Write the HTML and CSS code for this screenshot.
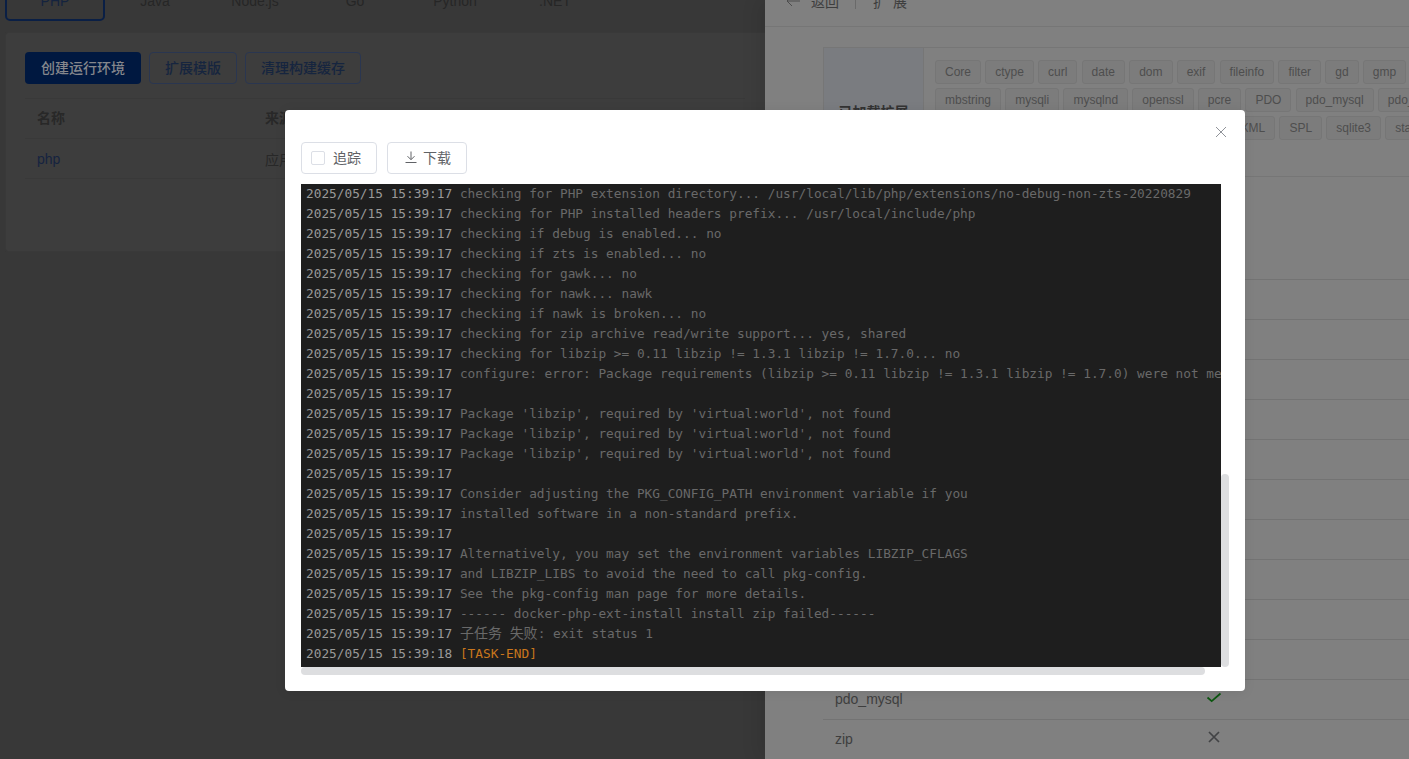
FILE: index.html
```html
<!DOCTYPE html>
<html lang="zh">
<head>
<meta charset="utf-8">
<title>PHP 运行环境</title>
<link rel="stylesheet" href="styles.css">
</head>
<body>
<div class="app">
  <main class="page">
    <nav class="tabs">
      <span class="tab tab-active">PHP</span>
      <span class="tab">Java</span>
      <span class="tab">Node.js</span>
      <span class="tab">Go</span>
      <span class="tab">Python</span>
      <span class="tab">.NET</span>
    </nav>
    <section class="card">
      <div class="actions">
        <span class="btn btn-primary">创建运行环境</span>
        <span class="btn btn-outline">扩展模版</span>
        <span class="btn btn-outline">清理构建缓存</span>
      </div>
      <div class="table">
        <div class="tr th"><span class="c1">名称</span><span>来源</span></div>
        <div class="tr"><span class="c1 link">php</span><span>应用商店</span></div>
      </div>
    </section>
  </main>

  <aside class="drawer">
    <header class="drawer-head">
      <svg class="back" width="14" height="14" viewBox="0 0 14 14"><path d="M14 7H1M6 2L1 7l5 5" fill="none" stroke="currentColor" stroke-width="1"/></svg>
      <span class="back-text">返回</span>
      <span class="divider"></span>
      <span class="drawer-title">扩展</span>
    </header>
    <div class="drawer-body">
      <div class="desc">
        <div class="desc-label">已加载扩展</div>
        <div class="desc-value">
          <div class="tag-row">
            <span class="tag">Core</span><span class="tag">ctype</span><span class="tag">curl</span><span class="tag">date</span><span class="tag">dom</span><span class="tag">exif</span><span class="tag">fileinfo</span><span class="tag">filter</span><span class="tag">gd</span><span class="tag">gmp</span><span class="tag">hash</span>
          </div>
          <div class="tag-row">
            <span class="tag">mbstring</span><span class="tag">mysqli</span><span class="tag">mysqlnd</span><span class="tag">openssl</span><span class="tag">pcre</span><span class="tag">PDO</span><span class="tag">pdo_mysql</span><span class="tag">pdo_sqlite</span>
          </div>
          <div class="tag-row">
            <span class="tag">Phar</span><span class="tag">readline</span><span class="tag">Reflection</span><span class="tag">session</span><span class="tag">SimpleXML</span><span class="tag">SPL</span><span class="tag">sqlite3</span><span class="tag">standard</span>
          </div>
        </div>
      </div>
      <div class="ext-list">
        <div class="ext-row"></div>
        <div class="ext-row"></div>
        <div class="ext-row"></div>
        <div class="ext-row"></div>
        <div class="ext-row"></div>
        <div class="ext-row"></div>
        <div class="ext-row"></div>
        <div class="ext-row"></div>
        <div class="ext-row"></div>
        <div class="ext-row"></div>
        <div class="ext-row"></div>
        <div class="ext-row">
          <span class="ext-name">pdo_mysql</span>
          <svg class="ext-icon" width="16" height="16" viewBox="0 0 16 16"><path d="M1.5 8.5l4.2 3.7L14.5 4.5" fill="none" stroke="#0b560f" stroke-width="1.7"/></svg>
        </div>
        <div class="ext-row">
          <span class="ext-name">zip</span>
          <svg class="ext-icon" width="16" height="16" viewBox="0 0 16 16"><path d="M3 3l10 10M13 3L3 13" fill="none" stroke="#424345" stroke-width="1.7"/></svg>
        </div>
      </div>
    </div>
  </aside>

  <div class="modal">
    <svg class="close" width="12" height="12" viewBox="0 0 12 12"><path d="M1 1l10 10M11 1L1 11" fill="none" stroke="#909399" stroke-width="1"/></svg>
    <div class="modal-tools">
      <span class="tool tool-track"><span class="check"></span>追踪</span>
      <span class="tool tool-dl">
        <svg width="14" height="14" viewBox="0 0 14 14"><path d="M7 1.5v8M3.5 6.2L7 9.7l3.5-3.5M1.5 12.5h11" fill="none" stroke="#606266" stroke-width="1"/></svg>
        下载
      </span>
    </div>
    <div class="log-wrap">
      <div class="log">
        <div class="line"><span class="ts">2025/05/15 15:39:17</span> checking for PHP extension directory... /usr/local/lib/php/extensions/no-debug-non-zts-20220829</div>
        <div class="line"><span class="ts">2025/05/15 15:39:17</span> checking for PHP installed headers prefix... /usr/local/include/php</div>
        <div class="line"><span class="ts">2025/05/15 15:39:17</span> checking if debug is enabled... no</div>
        <div class="line"><span class="ts">2025/05/15 15:39:17</span> checking if zts is enabled... no</div>
        <div class="line"><span class="ts">2025/05/15 15:39:17</span> checking for gawk... no</div>
        <div class="line"><span class="ts">2025/05/15 15:39:17</span> checking for nawk... nawk</div>
        <div class="line"><span class="ts">2025/05/15 15:39:17</span> checking if nawk is broken... no</div>
        <div class="line"><span class="ts">2025/05/15 15:39:17</span> checking for zip archive read/write support... yes, shared</div>
        <div class="line"><span class="ts">2025/05/15 15:39:17</span> checking for libzip &gt;= 0.11 libzip != 1.3.1 libzip != 1.7.0... no</div>
        <div class="line"><span class="ts">2025/05/15 15:39:17</span> configure: error: Package requirements (libzip &gt;= 0.11 libzip != 1.3.1 libzip != 1.7.0) were not met:</div>
        <div class="line"><span class="ts">2025/05/15 15:39:17</span></div>
        <div class="line"><span class="ts">2025/05/15 15:39:17</span> Package 'libzip', required by 'virtual:world', not found</div>
        <div class="line"><span class="ts">2025/05/15 15:39:17</span> Package 'libzip', required by 'virtual:world', not found</div>
        <div class="line"><span class="ts">2025/05/15 15:39:17</span> Package 'libzip', required by 'virtual:world', not found</div>
        <div class="line"><span class="ts">2025/05/15 15:39:17</span></div>
        <div class="line"><span class="ts">2025/05/15 15:39:17</span> Consider adjusting the PKG_CONFIG_PATH environment variable if you</div>
        <div class="line"><span class="ts">2025/05/15 15:39:17</span> installed software in a non-standard prefix.</div>
        <div class="line"><span class="ts">2025/05/15 15:39:17</span></div>
        <div class="line"><span class="ts">2025/05/15 15:39:17</span> Alternatively, you may set the environment variables LIBZIP_CFLAGS</div>
        <div class="line"><span class="ts">2025/05/15 15:39:17</span> and LIBZIP_LIBS to avoid the need to call pkg-config.</div>
        <div class="line"><span class="ts">2025/05/15 15:39:17</span> See the pkg-config man page for more details.</div>
        <div class="line"><span class="ts">2025/05/15 15:39:17</span> ------ docker-php-ext-install install zip failed------</div>
        <div class="line"><span class="ts">2025/05/15 15:39:17</span> <span class="cjk">子任务</span> <span class="cjk">失败</span>: exit status 1</div>
        <div class="line"><span class="ts">2025/05/15 15:39:18</span> <span class="end">[TASK-END]</span></div>
      </div>
      <div class="vbar"><span class="vthumb"></span></div>
      <div class="hbar"></div>
    </div>
  </div>
</div>
</body>
</html>
```
FILE: styles.css
```css
* { box-sizing: border-box; }
html, body { margin: 0; height: 100%; overflow: hidden; }
body { font-family: "Liberation Sans", "Noto Sans CJK SC", sans-serif; font-size: 14px; }

.app { position: relative; display: flex; width: 1409px; height: 759px; overflow: hidden; background: #383838; }

/* left page */
.page { width: 765px; flex: none; padding-left: 5px; }
.tabs { display: flex; height: 40px; margin-top: -19px; color: #262626; }
.tab { width: 100px; display: flex; align-items: center; justify-content: center; border-radius: 5px; }
.tab-active { border: 2px solid #0a1f45; color: #14233f; }
.card { margin-top: 11px; height: 220px; padding: 20px; background: #3d3d3d; border: 1px solid #393939; border-right: 0; border-radius: 3px 0 0 3px; }
.actions { display: flex; gap: 8px; margin-top: -1px; margin-left: -1px; }
.btn { height: 32px; display: flex; align-items: center; justify-content: center; border-radius: 4px; font-weight: 500; padding-bottom: 2px; }
.btn-primary { width: 116px; background: #001840; color: #85878c; }
.btn-outline { padding: 0 15px 2px; border: 1px solid #2a3650; color: #16253f; }
.table { margin-top: 14px; margin-left: -1px; color: #282828; border-top: 1px solid #393939; }
.tr { display: flex; height: 40px; align-items: center; border-bottom: 1px solid #393939; padding-left: 12px; }
.th { font-weight: 700; padding-bottom: 3px; }
.c1 { width: 228px; }
.link { color: #152340; }

/* drawer */
.drawer { flex: 1; background: #808080; color: #3e3e3e; box-shadow: -8px 0 16px rgba(0, 0, 0, .08); }
.drawer-head { height: 52px; margin-top: -25px; padding-left: 21px; display: flex; align-items: center; border-bottom: 1px solid #767676; }
.back { color: #4c4c4c; }
.back-text { margin-left: 11px; }
.divider { width: 1px; height: 16px; margin: 0 17px 0 16px; background: #6a6a6a; }
.drawer-title { letter-spacing: 6px; }
.drawer-body { padding: 20px 0 0 58px; }
.desc { display: flex; height: 130px; border: 1px solid #767676; border-right: 0; margin-right: -400px; }
.desc-label { width: 100px; flex: none; display: flex; align-items: center; justify-content: center; background: #7a7c80; font-weight: 700; color: #333; border-right: 1px solid #767676; padding-bottom: 2px; }
.desc-value { padding: 12px 0 0 11px; flex: 1; }
.tag-row { display: flex; gap: 4.2px; margin-bottom: 4px; white-space: nowrap; }
.tag { height: 24px; padding: 0 9px; display: flex; align-items: center; font-size: 12px; background: #7c7c7c; border: 1px solid #767676; border-radius: 3px; color: #4e4e4e; }

.ext-list { margin-top: 63px; }
.ext-row { height: 40px; display: flex; align-items: center; padding-left: 12px; border-bottom: 1px solid #737373; }
.ext-name { width: 371px; flex: none; margin-top: -2px; }
.ext-icon { margin-top: -6px; }

/* modal */
.modal { position: absolute; left: 285px; top: 110px; width: 960px; height: 581px; padding: 32px 16px 0; background: #fff; border-radius: 4px; box-shadow: 0 1px 12px rgba(0, 0, 0, .08); }
.close { position: absolute; left: 930px; top: 16px; }
.modal-tools { display: flex; gap: 10px; }
.tool { height: 32px; display: flex; align-items: center; padding-bottom: 2px; border: 1px solid #dcdfe6; border-radius: 4px; color: #606266; }
.tool-track { width: 76px; padding-left: 9px; }
.tool-dl { width: 80px; padding-left: 16px; gap: 5px; }
.check { width: 14px; height: 14px; margin-right: 8px; margin-top: 2px; border: 1px solid #dcdfe6; border-radius: 2px; }
.log-wrap { position: relative; margin-top: 10px; width: 928px; height: 491px; }
.log { width: 920px; height: 483px; padding-left: 5px; overflow: hidden; background: #1e1e1e; color: #696969; font-family: "DejaVu Sans Mono", "Noto Sans CJK SC", monospace; font-size: 12.79px; line-height: 20px; }
.line { height: 20px; white-space: pre; }
.ts { color: #9a9a9a; }
.cjk { font-size: 14px; line-height: 0; font-family: "Noto Sans CJK SC", sans-serif; }
.end { color: #c9761c; }
.vbar { position: absolute; left: 920px; top: 0; width: 8px; height: 483px; }
.vthumb { display: block; margin-top: 290px; height: 193px; background: #dddee0; border-radius: 4px; }
.hbar { position: absolute; left: 0; top: 483px; width: 904px; height: 8px; background: #dddee0; border-radius: 4px; }
```
